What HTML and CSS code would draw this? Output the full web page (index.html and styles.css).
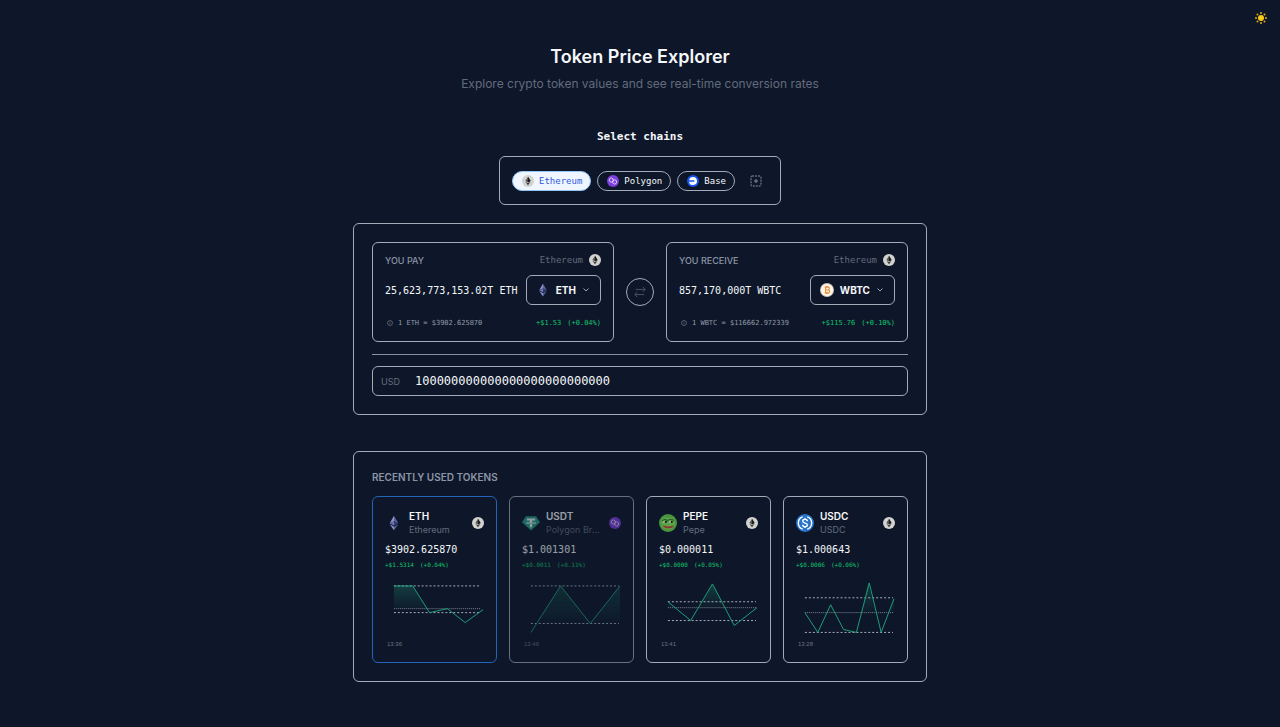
FILE: index.html
```html
<!DOCTYPE html>
<html lang="en">
<head>
<meta charset="utf-8">
<meta name="viewport" content="width=device-width, initial-scale=1">
<title>Token Price Explorer</title>
<link rel="stylesheet" href="styles.css">
</head>
<body>
<svg class="defs" aria-hidden="true">
  <defs>
    <linearGradient id="area" x1="0" y1="0" x2="0" y2="1">
      <stop offset="0" stop-color="#1f9d78" stop-opacity=".28"/>
      <stop offset="1" stop-color="#1f9d78" stop-opacity=".03"/>
    </linearGradient>
    <symbol id="eth-chain" viewBox="0 0 24 24">
      <circle cx="12" cy="12" r="12" fill="#d2d2d0"/>
      <path d="M12 3.5 6.8 12.2 12 15.2l5.2-3z" fill="#555"/>
      <path d="M12 3.5v11.7l5.2-3z" fill="#1c1c1c"/>
      <path d="M6.8 13.3 12 20.5l5.2-7.2-5.2 3z" fill="#333"/>
    </symbol>
    <symbol id="polygon" viewBox="0 0 24 24">
      <circle cx="12" cy="12" r="12" fill="#7c3fdc"/>
      <g fill="none" stroke="#eadcff" stroke-width="1.7" stroke-linejoin="round">
        <path d="m8.600 5.700 3.800 2.200v4.400l-3.800 2.200-3.800-2.200V7.900z"/>
        <path d="m15.400 9.500 3.800 2.200v4.400l-3.800 2.200-3.800-2.200v-4.400z"/>
      </g>
    </symbol>
    <symbol id="base" viewBox="0 0 24 24">
      <circle cx="12" cy="12" r="12" fill="#1653f0"/>
      <path d="M12 4a8 8 0 1 1-7.900 9.300h10.600v-2.600H4.100A8 8 0 0 1 12 4z" fill="#fff"/>
    </symbol>
    <symbol id="eth" viewBox="0 0 24 24">
      <path d="M12 1 5.500 12.300 12 9.400z" fill="#8c93c8"/>
      <path d="M12 1v8.400l6.500 2.900z" fill="#5a629f"/>
      <path d="M5.500 12.300 12 16.200V9.400z" fill="#6670ad"/>
      <path d="M18.500 12.300 12 16.200V9.400z" fill="#363f78"/>
      <path d="M5.500 13.700 12 23v-5.400z" fill="#8c93c8"/>
      <path d="M18.500 13.700 12 23v-5.400z" fill="#5a629f"/>
    </symbol>
    <symbol id="wbtc" viewBox="0 0 24 24">
      <circle cx="12" cy="12" r="12" fill="#c9c1bb"/>
      <circle cx="12" cy="12" r="10.500" fill="#fff5ea"/>
      <path d="M8 7h5.500a2.400 2.400 0 0 1 0 5H9.700h4.300a2.500 2.500 0 0 1 0 5H8M9.700 7v10M11 5v2m2.500-2v2M11 17v2m2.500-2v2" fill="none" stroke="#ee8a32" stroke-width="1.900"/>
    </symbol>
    <symbol id="usdt" viewBox="0 0 24 24">
      <path d="M5.200 3h13.600L24 11 12 22 0 11z" fill="#289b87"/>
      <path d="M6.500 6h11v2.800h-4v1.600c3 .2 5.300.8 5.300 1.500s-2.300 1.300-5.300 1.500v4.200h-3v-4.200c-3-.2-5.300-.8-5.300-1.500s2.300-1.300 5.300-1.500V8.800h-4z" fill="#e8f5f2"/>
      <path d="M10.500 11.200c-2 .1-3.600.4-3.600.7 0 .4 2.300.8 5.100.8s5.100-.4 5.100-.8c0-.3-1.600-.6-3.600-.7" fill="none" stroke="#289b87" stroke-width=".7"/>
    </symbol>
    <symbol id="pepe" viewBox="0 0 24 24">
      <circle cx="12" cy="12" r="12" fill="#4a9440"/>
      <path d="M3 10c1-5 5-6.500 8.500-4.500C15 3.500 20 4.500 21 9c1.500 5-1 11-8.500 11.500C6 20.500 2 17 3 10z" fill="#5aa548"/>
      <path d="M4.500 9.500C6 6.700 9.500 6.700 11.500 9c2-2.600 6.500-2.600 8.500 0" fill="none" stroke="#25591f" stroke-width="1.500"/>
      <ellipse cx="8" cy="10.500" rx="2.600" ry="1.300" fill="#c8d8bd"/>
      <ellipse cx="16.200" cy="10.500" rx="2.600" ry="1.300" fill="#c8d8bd"/>
      <circle cx="9" cy="10.500" r="1.500" fill="#111"/>
      <circle cx="17" cy="10.500" r="1.500" fill="#111"/>
      <path d="M5 14.500c4 2.300 10 2.300 14.500.5-.5 3.500-4 4.500-7.500 4.300-3.500-.2-6.500-1.800-7-4.800z" fill="#a5483a"/>
      <path d="M6 16.500c4 1.700 9 1.700 13 0" fill="none" stroke="#5d251d" stroke-width=".8"/>
    </symbol>
    <symbol id="usdc" viewBox="0 0 24 24">
      <circle cx="12" cy="12" r="12" fill="#2775ca"/>
      <g fill="none" stroke="#fff" stroke-width="1.800">
        <path d="M9 3.700a8.800 8.800 0 0 0 0 16.600M15 3.700a8.800 8.800 0 0 1 0 16.600"/>
        <path d="M15 9.500c0-1.500-1.300-2.300-3-2.300s-3 .8-3 2.300c0 3.400 6.200 1.700 6.200 5 0 1.500-1.400 2.300-3.200 2.300s-3.200-.8-3.200-2.500M12 5.300v2m0 9.400v2"/>
      </g>
    </symbol>
    <symbol id="chevron" viewBox="0 0 8 8">
      <path d="m1.500 2.500 2.500 2.500 2.500-2.500" fill="none" stroke="currentColor" stroke-width="1"/>
    </symbol>
    <symbol id="info" viewBox="0 0 12 12">
      <circle cx="6" cy="6" r="5" fill="none" stroke="currentColor"/>
      <path d="M6 5.500v3M6 3.200v1.200" stroke="currentColor"/>
    </symbol>
  </defs>
</svg>

<header class="topbar">
  <button class="theme" aria-label="Switch theme">
    <svg viewBox="0 0 24 24" aria-hidden="true">
      <circle cx="12" cy="12" r="6" fill="#facc15"/>
      <g fill="#e0ab14"><circle cx="12" cy="2" r="2"/><circle cx="12" cy="22" r="2"/><circle cx="2" cy="12" r="2"/><circle cx="22" cy="12" r="2"/><circle cx="5" cy="5" r="2"/><circle cx="19" cy="5" r="2"/><circle cx="5" cy="19" r="2"/><circle cx="19" cy="19" r="2"/></g>
    </svg>
  </button>
</header>

<main class="page">
  <h1 class="title">Token Price Explorer</h1>
  <p class="subtitle">Explore crypto token values and see real-time conversion rates</p>

  <h2 class="chains-title">Select chains</h2>
  <div class="chains">
    <button class="chip chip-active"><svg aria-hidden="true"><use href="#eth-chain"/></svg>Ethereum</button>
    <button class="chip"><svg aria-hidden="true"><use href="#polygon"/></svg>Polygon</button>
    <button class="chip"><svg aria-hidden="true"><use href="#base"/></svg>Base</button>
    <button class="add" aria-label="Add chain">
      <svg viewBox="0 0 12 12" aria-hidden="true"><rect x="1" y="1" width="10" height="10" rx="1" fill="none" stroke="currentColor" stroke-dasharray="2 1"/><path d="M6 4v4M4 6h4" stroke="currentColor"/></svg>
    </button>
  </div>

  <section class="panel exchange">
    <div class="sides">
      <div class="side">
        <div class="row side-head">
          <label class="label" for="pay">YOU PAY</label>
          <span class="chain">Ethereum <svg aria-hidden="true"><use href="#eth-chain"/></svg></span>
        </div>
        <div class="row side-main">
          <input class="amount" id="pay" type="text" value="25,623,773,153.02T ETH">
          <button class="picker"><svg class="coin" aria-hidden="true"><use href="#eth"/></svg>ETH<svg class="chevron" aria-hidden="true"><use href="#chevron"/></svg></button>
        </div>
        <div class="row side-foot">
          <span class="rate"><svg aria-hidden="true"><use href="#info"/></svg>1 ETH = $3902.625870</span>
          <span class="change"><span>+$1.53</span><span>(+0.04%)</span></span>
        </div>
      </div>
      <button class="swap" aria-label="Swap tokens">
        <svg viewBox="0 0 14 14" aria-hidden="true"><path d="M2 4h11M10 1l3 3-3 3M12 10H1M4 7l-3 3 3 3" fill="none" stroke="currentColor"/></svg>
      </button>
      <div class="side">
        <div class="row side-head">
          <label class="label" for="receive">YOU RECEIVE</label>
          <span class="chain">Ethereum <svg aria-hidden="true"><use href="#eth-chain"/></svg></span>
        </div>
        <div class="row side-main">
          <input class="amount" id="receive" type="text" value="857,170,000T WBTC">
          <button class="picker"><svg class="coin" aria-hidden="true"><use href="#wbtc"/></svg>WBTC<svg class="chevron" aria-hidden="true"><use href="#chevron"/></svg></button>
        </div>
        <div class="row side-foot">
          <span class="rate"><svg aria-hidden="true"><use href="#info"/></svg>1 WBTC = $116662.972339</span>
          <span class="change"><span>+$115.76</span><span>(+0.10%)</span></span>
        </div>
      </div>
    </div>
    <hr class="rule">
    <div class="usd">
      <label for="usd">USD</label>
      <input id="usd" type="text" value="100000000000000000000000000">
    </div>
  </section>

  <section class="panel recent">
    <h2 class="recent-title">RECENTLY USED TOKENS</h2>
    <div class="cards">
      <button class="card card-active">
        <span class="card-head">
          <svg class="logo" aria-hidden="true"><use href="#eth"/></svg>
          <span class="names"><span class="symbol">ETH</span><span class="name">Ethereum</span></span>
          <svg class="badge" aria-hidden="true"><use href="#eth-chain"/></svg>
        </span>
        <span class="price">$3902.625870</span>
        <span class="delta"><span>+$1.5314</span><span>(+0.04%)</span></span>
        <svg class="chart" viewBox="0 0 100 60" aria-hidden="true">
          <path class="area" d="M9 32V9h19l14 23z"/>
          <path class="dash" d="M9 9h88M9 36h88"/><path class="dots" d="M9 32h88"/>
          <path class="line" d="M9 9h19l17 27 18-4 18 14 18-13"/>
        </svg>
        <span class="time">13:36</span>
      </button>
      <button class="card card-muted">
        <span class="card-head">
          <svg class="logo" aria-hidden="true"><use href="#usdt"/></svg>
          <span class="names"><span class="symbol">USDT</span><span class="name">Polygon Br…</span></span>
          <svg class="badge" aria-hidden="true"><use href="#polygon"/></svg>
        </span>
        <span class="price">$1.001301</span>
        <span class="delta"><span>+$0.0011</span><span>(+0.11%)</span></span>
        <svg class="chart" viewBox="0 0 100 60" aria-hidden="true">
          <path class="area" d="M15 47 39 9l30 38L99 9v38z"/>
          <path class="dash" d="M9 9h89M9 47h89"/>
          <path class="line" d="M9 56 39 9l30 38L99 9"/>
        </svg>
        <span class="time">13:46</span>
      </button>
      <button class="card">
        <span class="card-head">
          <svg class="logo" aria-hidden="true"><use href="#pepe"/></svg>
          <span class="names"><span class="symbol">PEPE</span><span class="name">Pepe</span></span>
          <svg class="badge" aria-hidden="true"><use href="#eth-chain"/></svg>
        </span>
        <span class="price">$0.000011</span>
        <span class="delta"><span>+$0.0000</span><span>(+0.05%)</span></span>
        <svg class="chart" viewBox="0 0 100 60" aria-hidden="true">
          <path class="area" d="M9 25l7 6H9zM40 31 54 7l13 24z"/>
          <path class="dash" d="M9 25h89M9 44h89"/><path class="dots" d="M9 31h89"/>
          <path class="line" d="M9 25 32 44 54 7l22 42 23-18"/>
        </svg>
        <span class="time">13:41</span>
      </button>
      <button class="card">
        <span class="card-head">
          <svg class="logo" aria-hidden="true"><use href="#usdc"/></svg>
          <span class="names"><span class="symbol">USDC</span><span class="name">USDC</span></span>
          <svg class="badge" aria-hidden="true"><use href="#eth-chain"/></svg>
        </span>
        <span class="price">$1.000643</span>
        <span class="delta"><span>+$0.0006</span><span>(+0.06%)</span></span>
        <svg class="chart" viewBox="0 0 100 60" aria-hidden="true">
          <path class="area" d="M31 36l4-8 4 8zM66 36l7-30 7 30zM93 36l6-14v14z"/>
          <path class="dash" d="M9 21h89M9 56h89"/><path class="dots" d="M9 36h89"/>
          <path class="line" d="M9 36 22 56 35 28l13 25 13 3L74 6l12 50 13-34"/>
        </svg>
        <span class="time">13:28</span>
      </button>
    </div>
  </section>
</main>
</body>
</html>
```

FILE: styles.css
```css
:root {
  --bg: #0e1729;
  --line: #a3abb9;
  --text: #f5f7fa;
  --muted: #626b7d;
  --label: #8b95a7;
  --green: #0fc46c;
  --sans: "Inter", "Liberation Sans", sans-serif;
  --mono: "DejaVu Sans Mono", "Liberation Mono", monospace;
}

* { box-sizing: border-box; }

body {
  margin: 0;
  background: var(--bg);
  color: var(--text);
  font-family: var(--sans);
}

button, input {
  margin: 0;
  padding: 0;
  border: 0;
  background: none;
  color: inherit;
  font: inherit;
}

svg { display: block; flex: none; }
.defs { position: absolute; width: 0; height: 0; }

.topbar {
  display: flex;
  justify-content: flex-end;
  padding: 12px 13px 0;
}

.theme svg { width: 12px; height: 12px; overflow: visible; }

.page {
  display: flex;
  flex-direction: column;
  align-items: center;
  padding: 21px 16px 46px;
}

.title {
  margin: 0;
  font-size: 18px;
  line-height: 24px;
  font-weight: 600;
}

.subtitle {
  margin: 7px 0 0;
  color: var(--muted);
  font-size: 12px;
  line-height: 16px;
}

.chains-title {
  margin: 37px 0 0;
  font-family: var(--mono);
  font-size: 11px;
  line-height: 16px;
  font-weight: 700;
}

.chains {
  display: flex;
  align-items: center;
  gap: 6px;
  margin-top: 11px;
  padding: 14px 18px 13px 12px;
  border: 1px solid var(--line);
  border-radius: 6px;
}

.chip {
  display: flex;
  align-items: center;
  gap: 5px;
  height: 20px;
  padding: 0 8px 0 9px;
  border: 1px solid var(--line);
  border-radius: 10px;
  font-family: var(--mono);
  font-size: 9px;
}

.chip svg { width: 12px; height: 12px; }

.chip-active {
  background: #eff6ff;
  border-color: #93c5fd;
  color: #3159dc;
}

.add { margin-left: 9px; color: #858d9d; }
.add svg { width: 12px; height: 12px; }

.panel {
  width: 100%;
  max-width: 574px;
  padding: 18px;
  border: 1px solid var(--line);
  border-radius: 6px;
}

.exchange { margin-top: 18px; }

.sides {
  display: grid;
  grid-template-columns: minmax(0, 1fr) 28px minmax(0, 1fr);
  gap: 12px;
  align-items: center;
}

.side {
  padding: 11px 12px 12px;
  border: 1px solid var(--line);
  border-radius: 6px;
}

.row {
  display: flex;
  align-items: center;
  justify-content: space-between;
  gap: 8px;
}

.side-head, .side-foot { height: 12px; }
.side-main { margin: 9px 0 12px; }

.label {
  color: var(--label);
  font-size: 9px;
  font-weight: 500;
}

.chain {
  display: flex;
  align-items: center;
  gap: 6px;
  color: var(--muted);
  font-family: var(--mono);
  font-size: 9px;
}

.chain svg { width: 12px; height: 12px; }

.amount {
  flex: 1;
  min-width: 0;
  height: 24px;
  font-family: var(--mono);
  font-size: 10px;
}

.picker {
  display: flex;
  align-items: center;
  gap: 6px;
  height: 30px;
  padding: 0 10px 0 9px;
  border: 1px solid var(--line);
  border-radius: 6px;
  font-size: 10px;
  font-weight: 700;
}

.coin { width: 14px; height: 14px; }
.chevron { width: 8px; height: 8px; color: #9aa3b2; }

.rate {
  display: flex;
  align-items: center;
  gap: 5px;
  padding-left: 2px;
  color: #929aaa;
  font-family: var(--mono);
  font-size: 7px;
}

.rate svg { width: 6px; height: 6px; }

.change, .delta {
  display: flex;
  gap: 6px;
  color: var(--green);
  font-family: var(--mono);
}

.change { font-size: 7px; }
.delta { font-size: 6px; }

.swap {
  display: grid;
  place-items: center;
  width: 28px;
  height: 28px;
  border: 1px solid var(--line);
  border-radius: 50%;
  color: #515b6d;
}

.swap svg { width: 12px; height: 12px; }

.rule {
  height: 1px;
  margin: 12px 0 11px;
  border: 0;
  background: #8992a2;
}

.usd {
  display: flex;
  align-items: center;
  gap: 15px;
  height: 30px;
  padding: 0 8px;
  border: 1px solid var(--line);
  border-radius: 6px;
}

.usd label { color: var(--muted); font-size: 9px; }

.usd input {
  flex: 1;
  min-width: 0;
  font-family: var(--mono);
  font-size: 12px;
}

.recent { margin-top: 36px; }

.recent-title {
  margin: 0 0 12px;
  color: var(--label);
  font-size: 10px;
  line-height: 14px;
  font-weight: 600;
}

.cards {
  display: grid;
  grid-template-columns: repeat(4, minmax(0, 1fr));
  gap: 12px;
}

.card {
  display: flex;
  flex-direction: column;
  padding: 13px 12px 14px;
  border: 1px solid var(--line);
  border-radius: 6px;
  text-align: left;
}

.card-active { border-color: #2563b8; }
.card-muted { opacity: .6; }

.card-head {
  display: flex;
  align-items: center;
  gap: 6px;
  width: 100%;
  height: 26px;
}

.logo { width: 18px; height: 18px; }
.badge { width: 12px; height: 12px; }
.card-active .logo { padding: 1px; }

.names {
  display: flex;
  flex-direction: column;
  flex: 1;
  min-width: 0;
}

.symbol { font-size: 10px; line-height: 13px; font-weight: 600; }

.name {
  overflow: hidden;
  color: var(--muted);
  font-size: 9px;
  line-height: 13px;
  text-overflow: ellipsis;
  white-space: nowrap;
}

.price {
  margin-top: 7px;
  font-family: var(--mono);
  font-size: 10px;
  line-height: 14px;
}

.delta { margin-top: 4px; line-height: 8px; }

.chart {
  width: 100%;
  margin-top: 8px;
  overflow: visible;
}

.area { fill: url(#area); }
.dash, .dots, .line { fill: none; }
.dash { stroke: #a9b0bc; stroke-width: 1; stroke-dasharray: 2 2; }
.dots { stroke: #7c8594; stroke-width: 1; stroke-dasharray: 1 1; }
.line { stroke: #1f9d78; stroke-width: 1; }

.time {
  padding: 5px 0 0 2px;
  color: #6b7280;
  font-family: "Liberation Sans", sans-serif;
  font-size: 6px;
  line-height: 7px;
}
```
